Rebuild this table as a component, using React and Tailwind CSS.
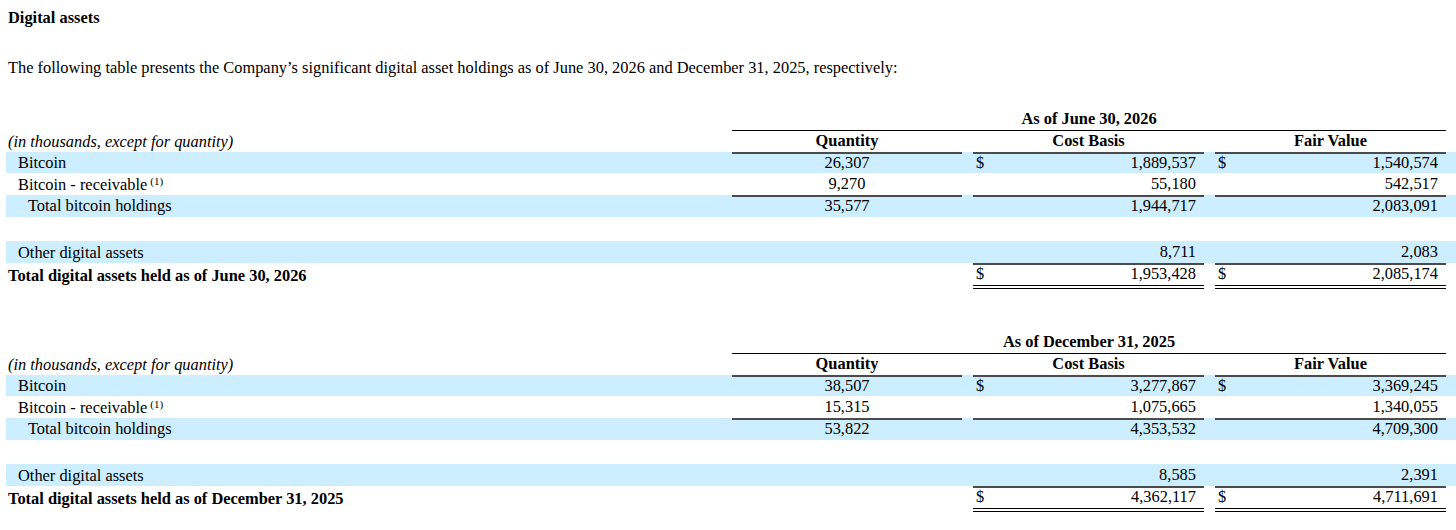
import clsx from "clsx";

const COLS = "grid grid-cols-[726px_230px_11px_231px_11px_231px]";
const BLUE = "bg-[#cceeff]";
const SINGLE = "border-b-2 border-[#4b4b4b]";
const DOUBLE = "border-b-4 border-double border-black";

const tables = [
  {
    date: "June 30, 2026",
    rows: [
      { label: "Bitcoin", indent: "pl-[12px]", blue: true, h: "h-[21px]", q: "26,307", cost: "1,889,537", fair: "1,540,574", dollar: true },
      { label: "Bitcoin - receivable", note: true, indent: "pl-[12px]", h: "h-[22px]", q: "9,270", cost: "55,180", fair: "542,517", line: SINGLE, qLine: true },
      { label: "Total bitcoin holdings", indent: "pl-[22px]", blue: true, h: "h-[22px]", q: "35,577", cost: "1,944,717", fair: "2,083,091" },
      { spacer: true },
      { label: "Other digital assets", indent: "pl-[12px]", blue: true, h: "h-[22px]", cost: "8,711", fair: "2,083", line: SINGLE },
      { label: "Total digital assets held as of June 30, 2026", bold: true, indent: "pl-[2px]", h: "h-[26px]", cost: "1,953,428", fair: "2,085,174", dollar: true, line: DOUBLE },
    ],
  },
  {
    date: "December 31, 2025",
    rows: [
      { label: "Bitcoin", indent: "pl-[12px]", blue: true, h: "h-[21px]", q: "38,507", cost: "3,277,867", fair: "3,369,245", dollar: true },
      { label: "Bitcoin - receivable", note: true, indent: "pl-[12px]", h: "h-[22px]", q: "15,315", cost: "1,075,665", fair: "1,340,055", line: SINGLE, qLine: true },
      { label: "Total bitcoin holdings", indent: "pl-[22px]", blue: true, h: "h-[22px]", q: "53,822", cost: "4,353,532", fair: "4,709,300" },
      { spacer: true },
      { label: "Other digital assets", indent: "pl-[12px]", blue: true, h: "h-[22px]", cost: "8,585", fair: "2,391", line: SINGLE },
      { label: "Total digital assets held as of December 31, 2025", bold: true, indent: "pl-[2px]", h: "h-[26px]", cost: "4,362,117", fair: "4,711,691", dollar: true, line: DOUBLE },
    ],
  },
];

function Money({ dollar, value, line }) {
  return (
    <div className={clsx("flex items-center justify-between pl-[3px] pr-[8px]", line)}>
      <span>{dollar ? "$" : ""}</span>
      <span>{value}</span>
    </div>
  );
}

function HoldingsTable({ date, rows }) {
  return (
    <div className="pl-[6px]">
      <div className={clsx(COLS, "h-[22px]")}>
        <div />
        <div className="col-span-5 flex items-center justify-center border-b border-black font-bold">
          As of {date}
        </div>
      </div>
      <div className={clsx(COLS, "h-[22px]")}>
        <div className="flex items-center pl-[2px] italic">(in thousands, except for quantity)</div>
        <div className={clsx("flex items-center justify-center font-bold", SINGLE)}>Quantity</div>
        <div />
        <div className={clsx("flex items-center justify-center font-bold", SINGLE)}>Cost Basis</div>
        <div />
        <div className={clsx("flex items-center justify-center font-bold", SINGLE)}>Fair Value</div>
      </div>
      {rows.map((r, i) =>
        r.spacer ? (
          <div key={i} className="h-[24px]" />
        ) : (
          <div key={i} className={clsx(COLS, r.h, r.blue && BLUE)}>
            <div className={clsx("flex items-center whitespace-nowrap", r.indent, r.bold && "font-bold")}>
              {r.label}
              {r.note && <sup className="ml-[3px] -top-[4px] text-[11px]">(1)</sup>}
            </div>
            <div className={clsx("flex items-center justify-center", r.qLine && r.line)}>{r.q}</div>
            <div />
            <Money dollar={r.dollar} value={r.cost} line={r.line} />
            <div />
            <Money dollar={r.dollar} value={r.fair} line={r.line} />
          </div>
        )
      )}
    </div>
  );
}

export default function App() {
  return (
    <div className="min-h-[530px] bg-white pt-[7px] font-['Liberation_Serif',serif] text-[16.4px] leading-[22px] text-black">
      <h1 className="pl-2 font-bold">Digital assets</h1>
      <p className="mt-[28px] pl-2">
        The following table presents the Company’s significant digital asset holdings as of June 30, 2026 and December 31, 2025, respectively:
      </p>
      <div className="mt-[29px]">
        <HoldingsTable {...tables[0]} />
      </div>
      <div className="mt-[42px]">
        <HoldingsTable {...tables[1]} />
      </div>
    </div>
  );
}
